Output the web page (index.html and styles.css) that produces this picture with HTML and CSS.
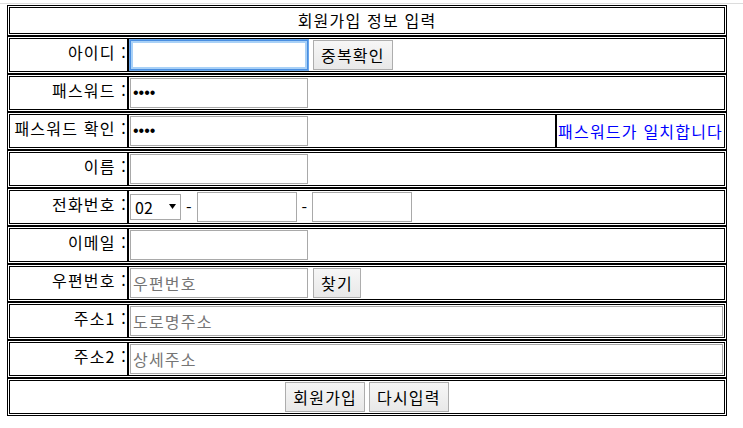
FILE: index.html
```
<!DOCTYPE html>
<html lang="ko">
<head>
    <meta charset="UTF-8">
    <meta name="viewport" content="width=device-width, initial-scale=1.0">
    <title>회원가입</title>
    <link rel="stylesheet" href="styles.css">
</head>
<body>
    <div class="topbar"></div>
    <form class="join">
        <table class="row">
            <tr><td class="title">회원가입 정보 입력</td></tr>
        </table>
        <table class="row">
            <tr>
                <td class="label">아이디 :</td>
                <td><div class="line"><input type="text" class="box focus"><button type="button">중복확인</button></div></td>
            </tr>
        </table>
        <table class="row">
            <tr>
                <td class="label">패스워드 :</td>
                <td><div class="line"><input type="password" class="box pw" value="1234"></div></td>
            </tr>
        </table>
        <table class="row">
            <tr>
                <td class="label">패스워드 확인 :</td>
                <td><div class="line"><input type="password" class="box pw" value="1234"></div></td>
                <td class="msg">패스워드가 일치합니다</td>
            </tr>
        </table>
        <table class="row">
            <tr>
                <td class="label">이름 :</td>
                <td><div class="line"><input type="text" class="box"></div></td>
            </tr>
        </table>
        <table class="row">
            <tr>
                <td class="label">전화번호 :</td>
                <td>
                    <div class="line">
                        <span class="select">
                            <select><option>02</option><option>031</option><option>010</option></select>
                            <svg class="caret" width="7" height="5" viewBox="0 0 7 5"><polygon points="0,0 7,0 3.5,5" fill="#000"/></svg>
                        </span>
                        <span class="sep">-</span>
                        <input type="text" class="box short">
                        <span class="sep">-</span>
                        <input type="text" class="box short">
                    </div>
                </td>
            </tr>
        </table>
        <table class="row">
            <tr>
                <td class="label">이메일 :</td>
                <td><div class="line"><input type="text" class="box"></div></td>
            </tr>
        </table>
        <table class="row">
            <tr>
                <td class="label">우편번호 :</td>
                <td><div class="line"><input type="text" class="box" placeholder="우편번호"><button type="button">찾기</button></div></td>
            </tr>
        </table>
        <table class="row">
            <tr>
                <td class="label">주소1 :</td>
                <td><div class="line"><input type="text" class="box wide" placeholder="도로명주소"></div></td>
            </tr>
        </table>
        <table class="row">
            <tr>
                <td class="label">주소2 :</td>
                <td><div class="line"><input type="text" class="box wide" placeholder="상세주소"></div></td>
            </tr>
        </table>
        <table class="row">
            <tr>
                <td><div class="actions"><button type="submit">회원가입</button><button type="reset">다시입력</button></div></td>
            </tr>
        </table>
    </form>
</body>
</html>
```
FILE: styles.css
```
body {
    margin: 0;
    font-family: "Noto Sans CJK KR", "Noto Sans", sans-serif;
    font-size: 16px;
    line-height: 23px;
    letter-spacing: 1.2px;
    color: #000;
    background-color: #fff;
}
.topbar {
    height: 1px;
    margin-top: 3px;
    background-color: #dcdcdc;
}
.join {
    margin: 1px 0 0 7px;
}
.row {
    width: 720px;
    border: 1px solid #000;
    padding: 1px;
    border-spacing: 0;
}
.row td {
    border: 1px solid #000;
    padding: 1px;
}
.title {
    text-align: center;
}
.row .label {
    width: 116px;
    padding: 2px 0 1px 1px;
    text-align: right;
    vertical-align: top;
    white-space: nowrap;
}
.msg {
    width: 1px;
    white-space: nowrap;
    color: #0000ff;
}
.line {
    display: flex;
    align-items: center;
    gap: 5px;
    height: 30px;
}
.sep {
    letter-spacing: normal;
}
.box {
    box-sizing: border-box;
    width: 178px;
    height: 30px;
    margin: 0;
    padding: 1px 2px;
    border: 1px solid #a9a9a9;
    font-family: inherit;
    font-size: 16px;
    letter-spacing: 1.2px;
    color: #000;
    outline: none;
}
.box::placeholder {
    color: #757575;
}
.box.short {
    width: 100px;
}
.box.wide {
    width: 100%;
}
.box.pw {
    font-family: "Liberation Sans", Arial, sans-serif;
    letter-spacing: normal;
}
.box.focus {
    border-color: #4a8ee0;
    box-shadow: 0 0 0 1px #6aa6ea, inset 0 0 0 2px #a9d1f7;
}
.select {
    position: relative;
    display: inline-block;
    height: 26px;
}
.select select {
    -webkit-appearance: none;
    appearance: none;
    box-sizing: border-box;
    width: 51px;
    height: 26px;
    margin: 0;
    padding: 0 0 0 4px;
    border: 1px solid #a9a9a9;
    border-radius: 0;
    background-color: #fff;
    font-family: inherit;
    font-size: 16px;
    color: #000;
}
.caret {
    position: absolute;
    left: 39px;
    top: 10px;
    pointer-events: none;
}
button {
    box-sizing: border-box;
    height: 30px;
    margin: 0;
    padding: 0 7px;
    border: 1px solid #adadad;
    border-radius: 0;
    background: linear-gradient(#f6f6f6, #e8e8e8);
    font-family: inherit;
    font-size: 16px;
    letter-spacing: 1.2px;
    color: #000;
    cursor: pointer;
}
.actions {
    display: flex;
    justify-content: center;
    gap: 4px;
}
```
